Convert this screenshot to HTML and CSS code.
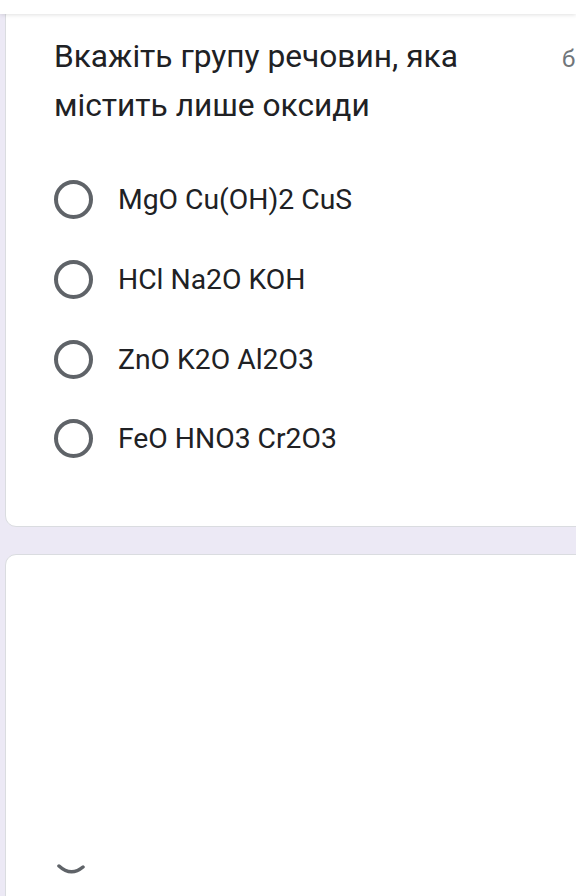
FILE: index.html
```html
<!DOCTYPE html>
<html lang="uk">
<head>
<meta charset="utf-8">
<title>Тест</title>
<link rel="stylesheet" href="styles.css">
</head>
<body>
<div class="topbar"></div>
<div class="card card-question">
  <div class="q-head">
    <div class="q-title">Вкажіть групу речовин, яка містить лише оксиди</div>
    <div class="q-points">бал</div>
  </div>
  <div class="options">
    <label class="option"><span class="radio"></span><span class="opt-text">MgO Cu(OH)2 CuS</span></label>
    <label class="option"><span class="radio"></span><span class="opt-text">HCl Na2O KOH</span></label>
    <label class="option"><span class="radio"></span><span class="opt-text">ZnO K2O Al2O3</span></label>
    <label class="option"><span class="radio"></span><span class="opt-text">FeO HNO3 Cr2O3</span></label>
  </div>
</div>
<div class="card card-next">
  <svg class="arc" width="30" height="14" viewBox="0 0 30 14"><path d="M3 4 Q15 15 27 5" fill="none" stroke="#5f6368" stroke-width="3.5" stroke-linecap="round"/></svg>
</div>
</body>
</html>
```
FILE: styles.css
```css
html, body {
  margin: 0;
  padding: 0;
}
body {
  background: #ece9f5;
  width: 576px;
  height: 896px;
  overflow: hidden;
  font-family: Roboto, "Noto Sans", sans-serif;
  color: #202124;
}
.topbar {
  position: relative;
  z-index: 2;
  height: 14px;
  background: #ffffff;
  box-shadow: 0 1px 4px rgba(0, 0, 0, 0.12);
}
.card {
  background: #ffffff;
  border: 1px solid #dadce0;
  border-radius: 11px;
  margin-left: 5px;
  width: 700px;
  box-sizing: border-box;
}
.card-question {
  margin-top: -10px;
  height: 523px;
  padding: 27px 0 0 48px;
}
.q-head {
  display: flex;
  align-items: baseline;
}
.q-title {
  width: 470px;
  font-size: 31.7px;
  line-height: 49px;
  font-weight: 400;
}
.q-points {
  margin-left: 38px;
  font-size: 24px;
  color: #70757a;
}
.options {
  margin-top: 30px;
  display: flex;
  flex-direction: column;
}
.option {
  display: flex;
  align-items: center;
  height: 79.7px;
}
.radio {
  width: 39px;
  height: 39px;
  box-sizing: border-box;
  border: 4px solid #5f6368;
  border-radius: 50%;
  flex: none;
}
.opt-text {
  margin-left: 25px;
  font-size: 28.3px;
}
.card-next {
  margin-top: 27px;
  height: 400px;
  padding-left: 50px;
}
.arc {
  display: block;
  margin-top: 307px;
}
```
